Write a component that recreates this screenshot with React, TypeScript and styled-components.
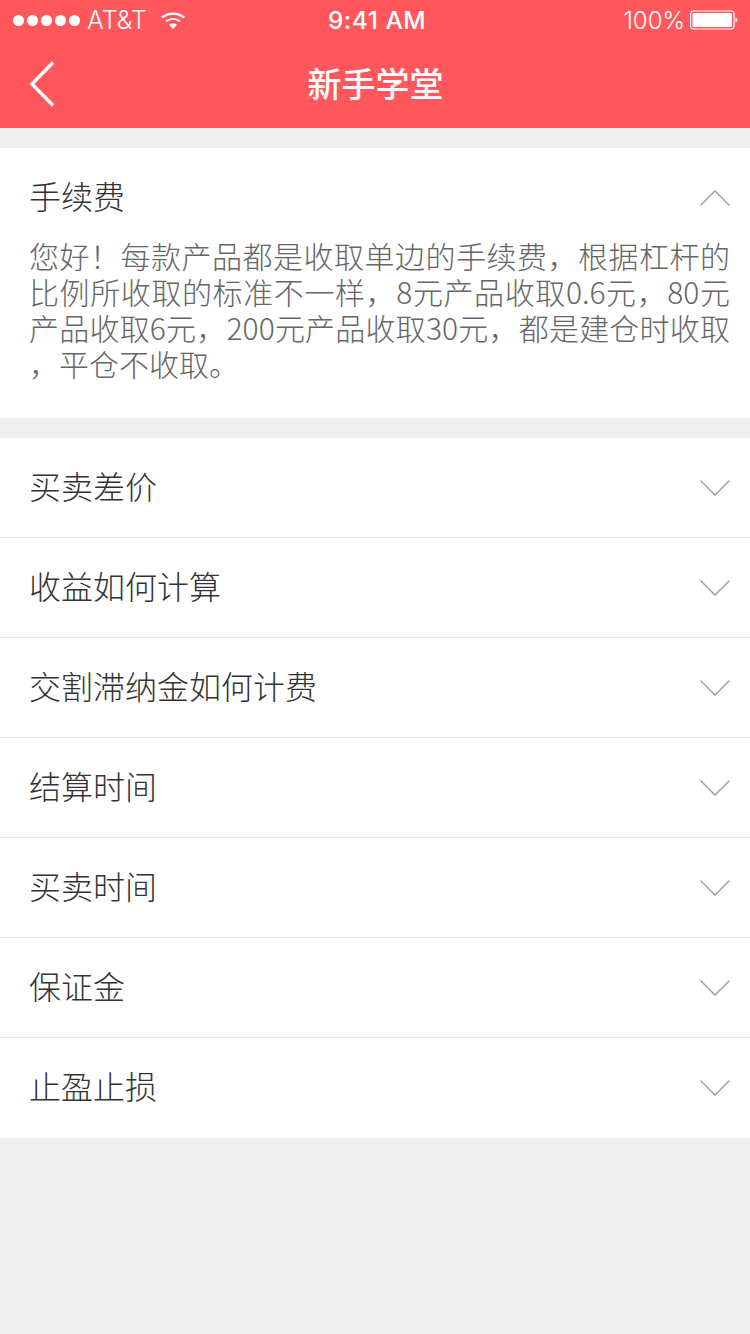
import React from 'react';
import styled, { createGlobalStyle } from 'styled-components';

const GlobalStyle = createGlobalStyle`
  html, body {
    margin: 0;
    padding: 0;
    background: #efefef;
  }
  * {
    box-sizing: border-box;
  }
`

const Page = styled.div`
  width: 750px;
  min-height: 1334px;
  background: #efefef;
  font-family: "Liberation Sans", "Noto Sans CJK SC", sans-serif;
`

const Header = styled.div`
  height: 128px;
  background: #ff575c;
  color: #fff;
`

const StatusBar = styled.div`
  height: 40px;
  display: grid;
  grid-template-columns: 1fr auto 1fr;
  align-items: center;
  font-family: Inter, "Liberation Sans", sans-serif;
  font-size: 24px;
  font-weight: 300;
`

const StatusLeft = styled.div`
  display: flex;
  align-items: center;
  padding-left: 13px;
`

const Dots = styled.div`
  display: flex;
  gap: 3px;
  margin-right: 7px;
`

const Dot = styled.span`
  width: 11px;
  height: 11px;
  border-radius: 50%;
  background: #fff;
`

const Carrier = styled.span`
  font-size: 25px;
`

const WifiIcon = styled.svg`
  width: 26px;
  height: 19px;
  margin-left: 13px;
`

const Clock = styled.div`
  font-size: 24.5px;
  font-weight: 500;
  letter-spacing: 0.5px;
  padding-left: 4px;
`

const StatusRight = styled.div`
  display: flex;
  align-items: center;
  justify-content: flex-end;
  padding-right: 12px;
`

const BatteryIcon = styled.svg`
  width: 48px;
  height: 20px;
  margin-left: 5px;
`

const NavBar = styled.div`
  height: 88px;
  display: grid;
  grid-template-columns: 1fr auto 1fr;
  align-items: center;
`

const BackIcon = styled.svg`
  width: 26px;
  height: 46px;
  margin-left: 29px;
  display: block;
`

const Title = styled.div`
  font-size: 34px;
  font-weight: 500;
  line-height: 40px;
  margin-top: 1px;
  padding-left: 1px;
`

const Section = styled.div`
  background: #fff;
  margin-top: 20px;
`

const Row = styled.div<{ $divider?: boolean }>`
  height: 100px;
  padding: 0 20px 0 30px;
  display: flex;
  align-items: center;
  justify-content: space-between;
  border-bottom: ${p => (p.$divider ? '1px solid #e3e3e3' : 'none')};
`

const RowTitle = styled.div`
  font-size: 32px;
  font-weight: 300;
  line-height: 40px;
  color: #333;
  margin-left: -1px;
`

const Chevron = styled.svg`
  width: 30px;
  height: 16px;
  display: block;
`

const Answer = styled.div`
  margin-top: -11px;
  padding: 0 20px 37px 29px;
  font-family: "Noto Sans CJK SC", sans-serif;
  font-size: 30px;
  font-weight: 300;
  line-height: 36px;
  color: #666;
  text-align: justify;
  line-break: anywhere;
`

const ChevronIcon = ({ up }: { up?: boolean }) => (
  <Chevron viewBox="0 0 30 16" fill="none" stroke="#999" strokeWidth="1.3">
    <path d={up ? 'M0.5 15.5 L15 1 L29.5 15.5' : 'M0.5 0.5 L15 15 L29.5 0.5'} />
  </Chevron>
)

const topics = [
  '买卖差价',
  '收益如何计算',
  '交割滞纳金如何计费',
  '结算时间',
  '买卖时间',
  '保证金',
  '止盈止损',
]

export default function App() {
  return (
    <Page>
      <GlobalStyle />
      <Header>
        <StatusBar>
          <StatusLeft>
            <Dots>
              {[0, 1, 2, 3, 4].map(i => (
                <Dot key={i} />
              ))}
            </Dots>
            <Carrier>AT&amp;T</Carrier>
            <WifiIcon viewBox="0 0 28 20" fill="none" stroke="#fff" strokeWidth="2.4">
              <path d="M2 7 C9 1 19 1 26 7" />
              <path d="M6.5 11 C11 7.5 17 7.5 21.5 11" />
              <path d="M14 19.5 L9.8 14.6 C12 12.8 16 12.8 18.2 14.6 Z" fill="#fff" stroke="none" />
            </WifiIcon>
          </StatusLeft>
          <Clock>9:41 AM</Clock>
          <StatusRight>
            <span>100%</span>
            <BatteryIcon viewBox="0 0 48 20">
              <rect x="0.6" y="1" width="43.5" height="18" rx="3" fill="none" stroke="#fff" strokeWidth="1.2" />
              <rect x="2.5" y="3" width="39.5" height="14" rx="1.5" fill="#fff" />
              <path d="M45.5 7.5 C46.8 8 47.4 9 47.4 10 C47.4 11 46.8 12 45.5 12.5 Z" fill="#fff" />
            </BatteryIcon>
          </StatusRight>
        </StatusBar>
        <NavBar>
          <BackIcon viewBox="0 0 26 46" fill="none" stroke="#fff" strokeWidth="3.4">
            <path d="M24 1.5 L3 23 L24 44.5" />
          </BackIcon>
          <Title>新手学堂</Title>
        </NavBar>
      </Header>

      <Section>
        <Row>
          <RowTitle>手续费</RowTitle>
          <ChevronIcon up />
        </Row>
        <Answer>
          您好！每款产品都是收取单边的手续费，根据杠杆的比例所收取的标准不一样，8元产品收取0.6元，80元产品收取6元，200元产品收取30元，都是建仓时收取，平仓不收取。
        </Answer>
      </Section>

      <Section>
        {topics.map((t, i) => (
          <Row key={t} $divider={i < topics.length - 1}>
            <RowTitle>{t}</RowTitle>
            <ChevronIcon />
          </Row>
        ))}
      </Section>
    </Page>
  )
}
